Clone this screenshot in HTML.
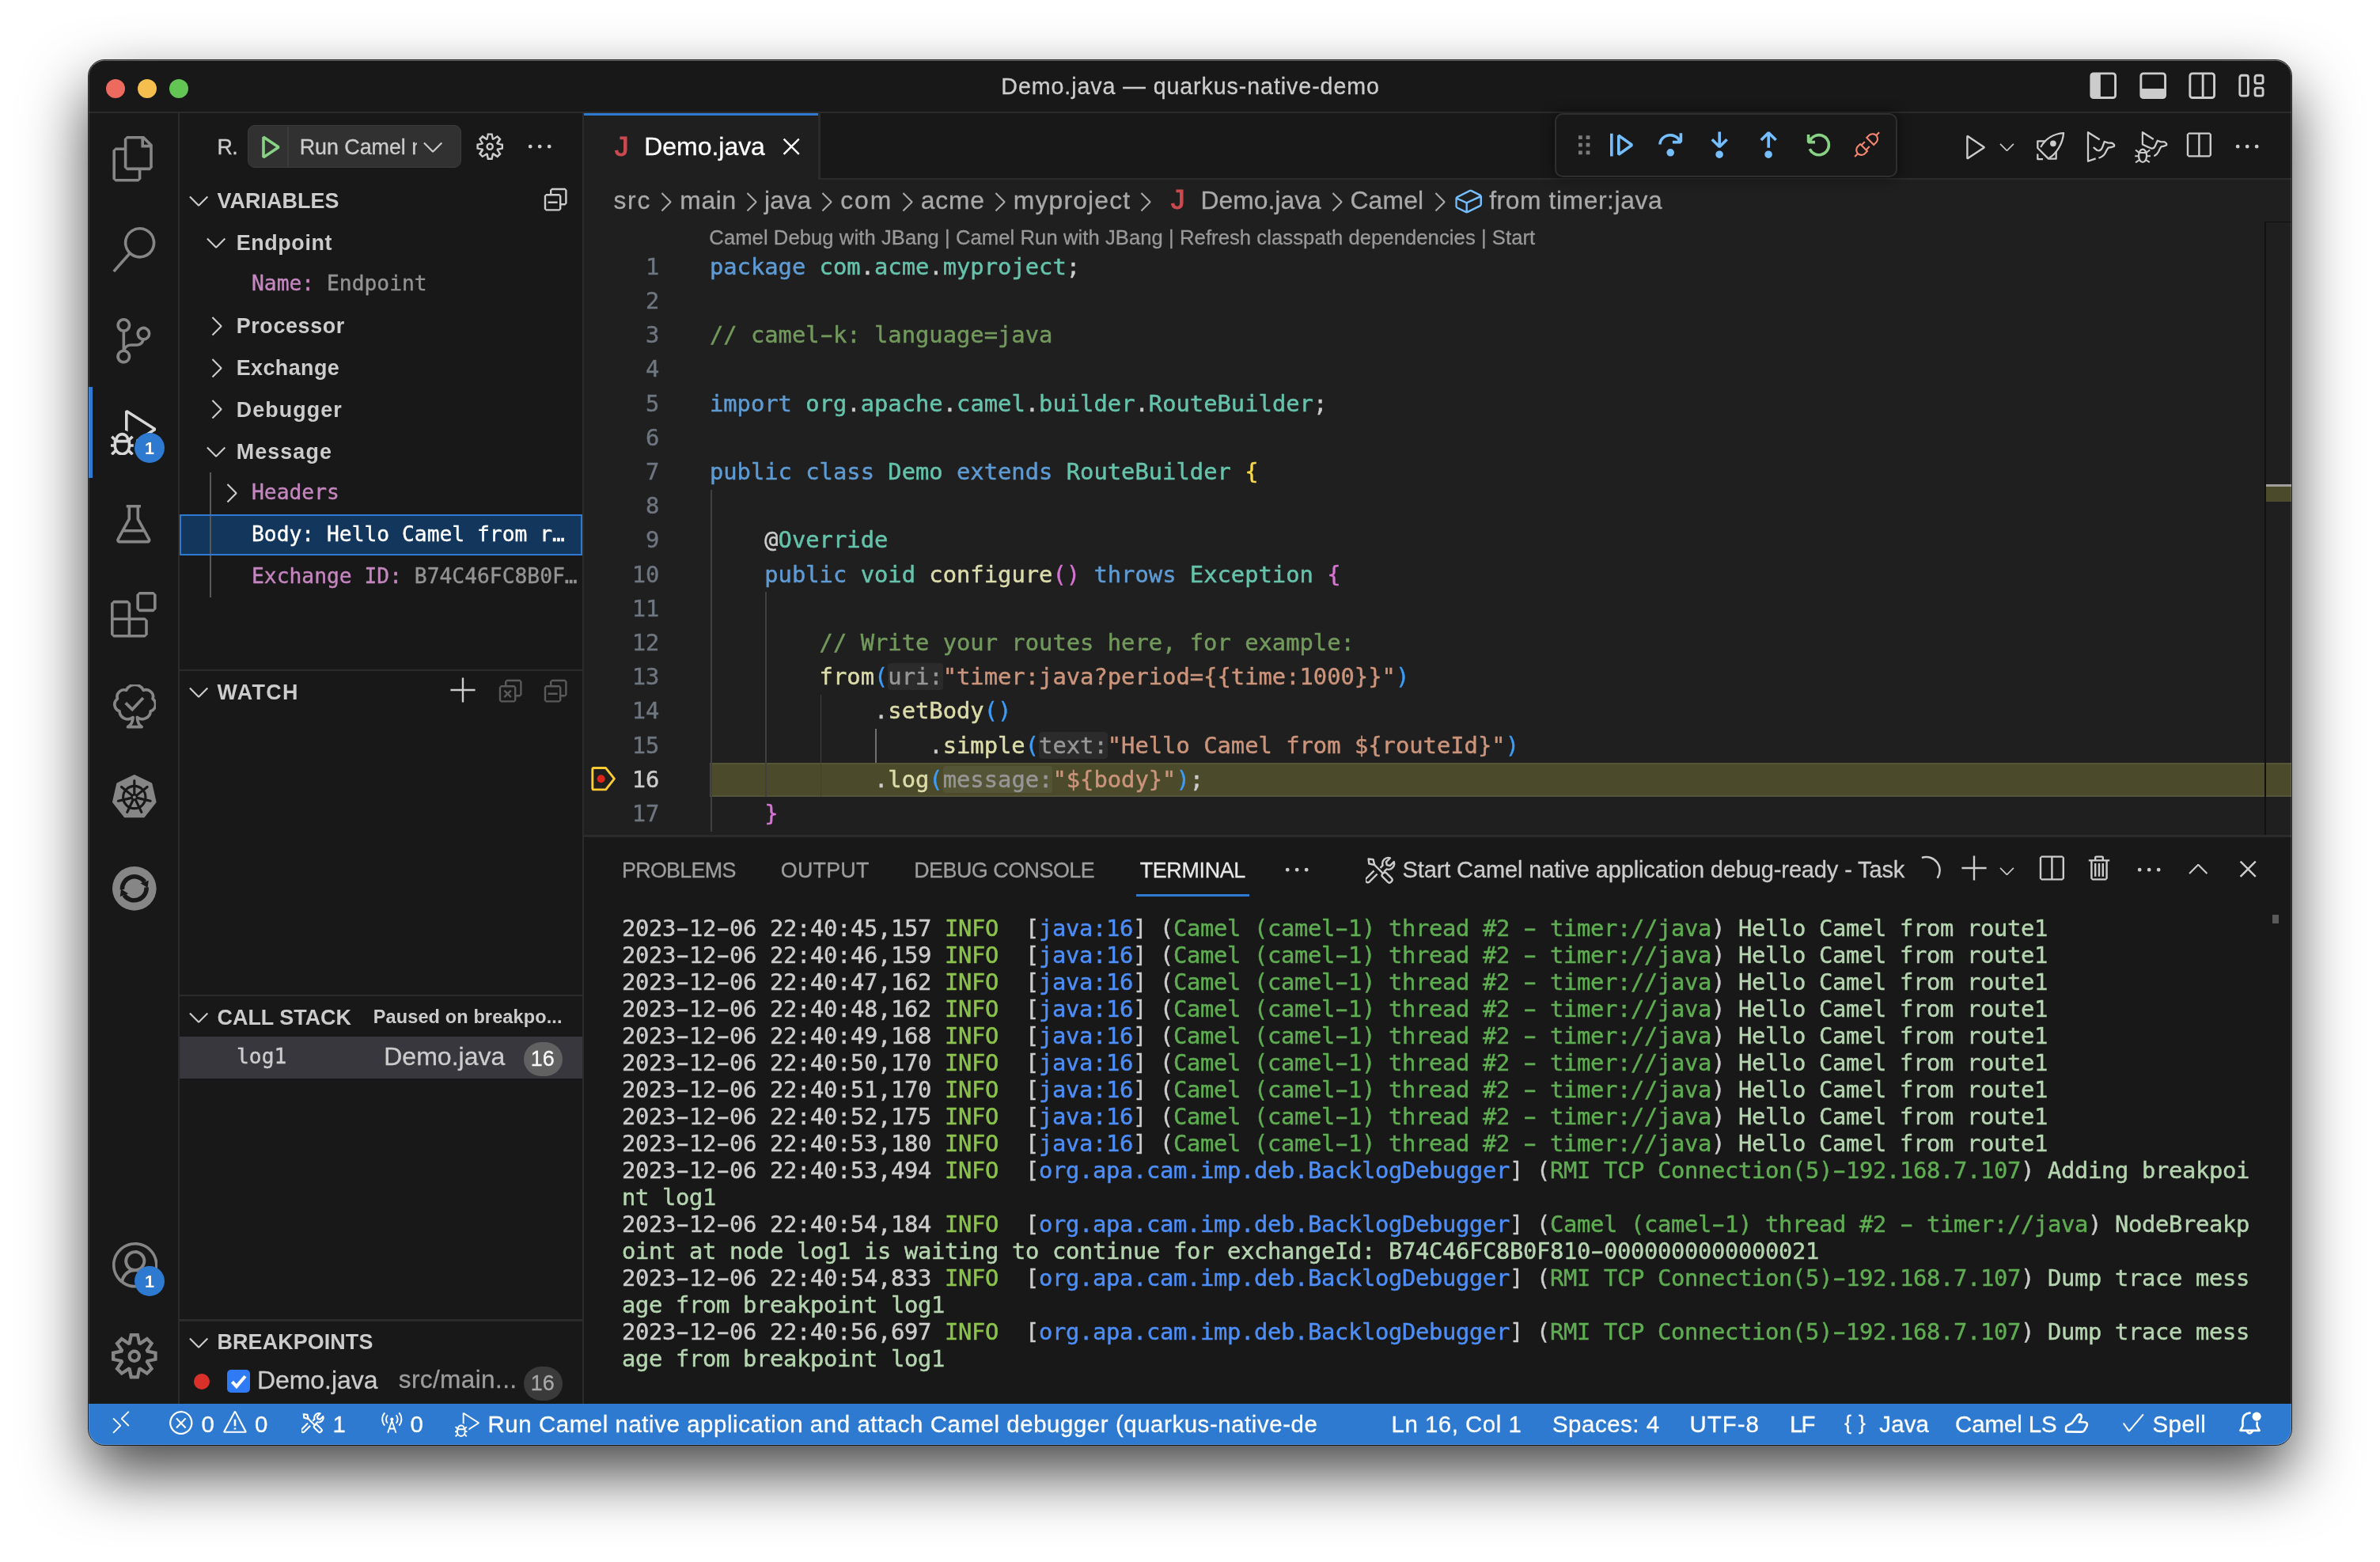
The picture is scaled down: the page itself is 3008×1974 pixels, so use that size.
<!DOCTYPE html>
<html><head><meta charset="utf-8"><title>Demo.java — quarkus-native-demo</title>
<style>
html,body{margin:0;padding:0;background:#fff;}
body{width:3008px;height:1974px;position:relative;overflow:hidden;}
#shadow{position:absolute;left:112px;top:76px;width:2784px;height:1750px;border-radius:20px;box-shadow:0 36px 80px rgba(0,0,0,0.73);}
#win{will-change:transform;position:absolute;left:0;top:0;width:3008px;height:1974px;clip-path:inset(76px 112px 148px 112px round 20px);background:#181818;}
#win div,#win svg{position:absolute}
</style></head><body>
<div id="shadow"></div>
<div id="win">
<div style="position:absolute;left:112.00px;top:76.00px;width:2784.00px;height:1750.00px;background:#181818;"></div>
<div style="position:absolute;left:738.00px;top:227.20px;width:2158.00px;height:829.00px;background:#1f1f1f;"></div>
<div style="position:absolute;left:112.00px;top:140.80px;width:2784.00px;height:2.40px;background:#2b2b2b;"></div>
<div style="position:absolute;left:224.80px;top:143.20px;width:2.40px;height:1631.00px;background:#2b2b2b;"></div>
<div style="position:absolute;left:735.60px;top:143.20px;width:2.40px;height:1631.00px;background:#2b2b2b;"></div>
<div style="position:absolute;left:133.80px;top:99.80px;width:24.40px;height:24.40px;background:#ed6a5e;border-radius:50%"></div>
<div style="position:absolute;left:173.80px;top:99.80px;width:24.40px;height:24.40px;background:#f5bf4f;border-radius:50%"></div>
<div style="position:absolute;left:213.80px;top:99.80px;width:24.40px;height:24.40px;background:#62c554;border-radius:50%"></div>
<div style="position:absolute;left:1265.37px;top:95.18px;font-family:'Liberation Sans', sans-serif;font-size:28.6px;line-height:28.6px;color:#cccccc;white-space:pre;-webkit-text-stroke:0.3px;letter-spacing:0.926px;">Demo.java — quarkus-native-demo</div>
<svg style="position:absolute;left:2639.40px;top:88.80px;" width="38.40" height="38.40" viewBox="0 0 16 16"><rect x="1.6" y="1.6" width="12.8" height="12.8" rx="1.3" fill="none" stroke="#cccccc" stroke-width="1.2"/><rect x="1.6" y="1.6" width="5" height="12.8" fill="#cccccc"/></svg>
<svg style="position:absolute;left:2701.60px;top:88.80px;" width="38.40" height="38.40" viewBox="0 0 16 16"><rect x="1.6" y="1.6" width="12.8" height="12.8" rx="1.3" fill="none" stroke="#cccccc" stroke-width="1.2"/><rect x="1.6" y="9.6" width="12.8" height="4.8" fill="#cccccc"/></svg>
<svg style="position:absolute;left:2763.80px;top:88.80px;" width="38.40" height="38.40" viewBox="0 0 16 16"><rect x="1.6" y="1.6" width="12.8" height="12.8" rx="1.3" fill="none" stroke="#cccccc" stroke-width="1.2"/><path d="M8.4 1.6v12.8" stroke="#cccccc" stroke-width="1.2" fill="none"/></svg>
<svg style="position:absolute;left:2826.80px;top:88.80px;" width="38.40" height="38.40" viewBox="0 0 16 16"><rect x="1.6" y="2.6" width="4.4" height="10.8" rx="1" fill="none" stroke="#cccccc" stroke-width="1.2"/><rect x="9.6" y="2.6" width="4.2" height="4.2" rx="1" fill="none" stroke="#cccccc" stroke-width="1.2"/><rect x="9.6" y="9.2" width="4.2" height="4.200" rx="1" fill="none" stroke="#cccccc" stroke-width="1.2"/></svg>
<svg style="position:absolute;left:140.20px;top:172.00px;" width="57.60" height="57.60" viewBox="0 0 24 24"><path fill="#868686" d="M17.5 0h-9L7 1.5V6H2.5L1 7.5v15.07L2.5 24h12.07L16 22.57V18h4.7l1.3-1.43V4.5L17.5 0zm0 2.12l2.38 2.38H17.5V2.12zm-3 20.38h-12v-15H7v9.07L8.5 18h6v4.5zm6-6h-12v-15H16V6h4.5v10.5z"/></svg>
<svg style="position:absolute;left:140.20px;top:287.20px;" width="57.60" height="57.60" viewBox="0 0 24 24"><path fill="#868686" d="M15.25 0a8.25 8.25 0 0 0-6.18 13.72L1 22.88l1.12 1 8.05-9.12A8.251 8.251 0 1 0 15.25.01V0zm0 15a6.75 6.75 0 1 1 0-13.5 6.75 6.75 0 0 1 0 13.5z"/></svg>
<svg style="position:absolute;left:140.20px;top:402.40px;" width="57.60" height="57.60" viewBox="0 0 24 24"><path fill="#868686" d="M21.007 8.222A3.738 3.738 0 0 0 15.045 5.2a3.737 3.737 0 0 0 1.156 6.583 2.988 2.988 0 0 1-2.668 1.67h-2.99a4.456 4.456 0 0 0-2.989 1.165V7.4a3.737 3.737 0 1 0-1.494 0v9.117a3.776 3.776 0 1 0 1.816.099 2.99 2.99 0 0 1 2.668-1.667h2.99a4.484 4.484 0 0 0 4.223-3.039 3.736 3.736 0 0 0 3.25-3.687zM4.565 3.738a2.242 2.242 0 1 1 4.484 0 2.242 2.242 0 0 1-4.484 0zm4.484 16.441a2.242 2.242 0 1 1-4.484 0 2.242 2.242 0 0 1 4.484 0zm8.221-9.715a2.242 2.242 0 1 1 0-4.485 2.242 2.242 0 0 1 0 4.485z"/></svg>
<div style="position:absolute;left:112.00px;top:488.80px;width:4.80px;height:115.20px;background:#2e7ad1;"></div>
<svg style="position:absolute;left:140.20px;top:517.60px;" width="57.60" height="57.60" viewBox="0 0 24 24"><path fill="#d7d7d7" d="M10.94 13.5l-1.32 1.32a3.73 3.73 0 0 0-7.24 0L1.06 13.5 0 14.56l1.72 1.72-.22.22V18H0v1.5h1.5v.08c.077.489.214.966.41 1.42L0 22.94 1.06 24l1.65-1.65A4.308 4.308 0 0 0 6 24a4.31 4.31 0 0 0 3.29-1.65L10.94 24 12 22.94 10.09 21c.198-.464.336-.951.41-1.45v-.1H12V18h-1.5v-1.5l-.22-.22L12 14.56l-1.06-1.06zM6 13.5a2.25 2.25 0 0 1 2.25 2.25h-4.5A2.25 2.25 0 0 1 6 13.5zm3 6a3.33 3.33 0 0 1-3 3 3.33 3.33 0 0 1-3-3v-2.25h6v2.25zm14.76-9.9v1.26L13.5 17.37V15.6l8.5-5.37L9 2v9.46a5.07 5.07 0 0 0-1.5-.72V.63L8.64 0l15.12 9.6z"/></svg>
<div style="position:absolute;left:169.60px;top:546.70px;width:38.40px;height:38.40px;background:#2e7ad1;border-radius:50%"></div>
<div style="position:absolute;left:182.90px;top:556.41px;font-family:'Liberation Sans', sans-serif;font-size:21.6px;line-height:21.6px;color:#ffffff;white-space:pre;font-weight:700;">1</div>
<svg style="position:absolute;left:140.20px;top:632.80px;" width="57.60" height="57.60" viewBox="0 0 24 24"><path d="M8.200 2.800h7.600M9.700 2.800v6.700L3.800 20.300a.8.8 0 0 0 .7 1.200h15a.8.8 0 0 0 .7-1.200L14.300 9.500V2.800M6.300 15.750h11.400" fill="none" stroke="#868686" stroke-width="1.500" stroke-linejoin="round"/></svg>
<svg style="position:absolute;left:140.20px;top:748.00px;" width="57.60" height="57.60" viewBox="0 0 24 24"><path fill="#868686" d="M13.5 1.5L15 0h7.5L24 1.5V9l-1.5 1.5H15L13.5 9V1.5zm1.5 0V9h7.5V1.5H15zM0 15V6l1.5-1.5H9L10.5 6v7.5H18l1.5 1.5v7.5L18 24H1.5L0 22.5V15zm9-1.5V6H1.5v7.5H9zM9 15H1.5v7.5H9V15zm1.5 7.5H18V15h-7.5v7.5z"/></svg>
<svg style="position:absolute;left:141.80px;top:864.80px;" width="55.00" height="57.30" viewBox="0 0 24 25"><path d="M11.4 18.1A4.600 4.600 0 0 1 3.9 14.7A3.900 3.900 0 0 1 2.8 7.900A3.800 3.800 0 0 1 7.700 3.200A5.200 5.200 0 0 1 17.100 3.200A3.900 3.900 0 0 1 22.300 7.900A3.900 3.900 0 0 1 21.100 14.700A4.600 4.600 0 0 1 13.700 18.100Q13.900 22 16.200 23.400H8.500Q11.200 22 11.400 18.100z" fill="none" stroke="#868686" stroke-width="1.600" stroke-linejoin="round"/><path d="M7.300 10.200l3.700 3.600 6-6.400" fill="none" stroke="#868686" stroke-width="1.600"/></svg>
<svg style="position:absolute;left:141.20px;top:978.40px;" width="57.60" height="57.60" viewBox="0 0 24 24"><polygon points="12.00,1.20 20.68,5.38 22.82,14.77 16.82,22.30 7.18,22.30 1.18,14.77 3.32,5.38" fill="#868686" stroke="#868686" stroke-width="1.500" stroke-linejoin="round"/><circle cx="12" cy="12.300" r="5.900" fill="none" stroke="#181818" stroke-width="1.300"/><circle cx="12" cy="12.300" r="1.900" fill="#181818"/><circle cx="12" cy="12.300" r=".8" fill="#868686"/><path d="M12.00 10.70L12.00 3.60" stroke="#181818" stroke-width="1.300" fill="none" stroke-linecap="round"/><path d="M13.25 11.30L18.80 6.88" stroke="#181818" stroke-width="1.300" fill="none" stroke-linecap="round"/><path d="M13.56 12.66L20.48 14.24" stroke="#181818" stroke-width="1.300" fill="none" stroke-linecap="round"/><path d="M12.69 13.74L15.77 20.14" stroke="#181818" stroke-width="1.300" fill="none" stroke-linecap="round"/><path d="M11.31 13.74L8.23 20.14" stroke="#181818" stroke-width="1.300" fill="none" stroke-linecap="round"/><path d="M10.44 12.66L3.52 14.24" stroke="#181818" stroke-width="1.300" fill="none" stroke-linecap="round"/><path d="M10.75 11.30L5.20 6.88" stroke="#181818" stroke-width="1.300" fill="none" stroke-linecap="round"/></svg>
<svg style="position:absolute;left:141.20px;top:1093.60px;" width="57.60" height="57.60" viewBox="0 0 24 24"><circle cx="12" cy="12" r="11.600" fill="#868686"/><path d="M5.600 12.600a6.500 6.500 0 0 1 11.800-4.100" fill="none" stroke="#181818" stroke-width="2.300"/><path d="M18.400 11.400a6.500 6.500 0 0 1-11.800 4.100" fill="none" stroke="#181818" stroke-width="2.300"/><path d="M15.200 9.300l4.300-1.500-.5 3.900zM8.800 14.700l-4.300 1.500.5-3.900z" fill="#181818"/></svg>
<svg style="position:absolute;left:141.50px;top:1570.20px;" width="57.60" height="57.60" viewBox="0 0 16 16"><path fill="#868686" d="M16 7.992C16 3.58 12.416 0 8 0S0 3.58 0 7.992c0 2.43 1.104 4.62 2.832 6.09.016.016.032.016.032.032.144.112.288.224.448.336.08.048.144.111.224.175A7.98 7.98 0 0 0 8.016 16a7.98 7.98 0 0 0 4.48-1.375c.08-.048.144-.111.224-.16.144-.111.304-.223.448-.335.016-.016.032-.016.032-.032 1.696-1.487 2.8-3.676 2.8-6.106zm-8 7.001c-1.504 0-2.88-.48-4.016-1.279.016-.128.048-.255.08-.383a4.17 4.17 0 0 1 .416-.991c.176-.304.384-.576.64-.816.24-.24.528-.463.816-.639.304-.176.624-.304.976-.4A4.15 4.15 0 0 1 8 10.342a4.185 4.185 0 0 1 2.928 1.166c.368.368.656.8.864 1.295.112.288.192.592.24.911A7.03 7.03 0 0 1 8 14.993zm-2.448-7.4a2.49 2.49 0 0 1-.208-1.024c0-.351.064-.703.208-1.023.144-.32.336-.607.576-.847.24-.24.528-.431.848-.575.32-.144.672-.208 1.024-.208.368 0 .704.064 1.024.208.32.144.608.336.848.575.24.24.432.528.576.847.144.32.208.672.208 1.023 0 .368-.064.704-.208 1.023a2.84 2.84 0 0 1-.576.848 2.84 2.84 0 0 1-.848.575 2.715 2.715 0 0 1-2.064 0 2.84 2.84 0 0 1-.848-.575 2.526 2.526 0 0 1-.56-.848zm7.424 5.306c0-.032-.016-.048-.016-.08a5.22 5.22 0 0 0-.688-1.406 4.883 4.883 0 0 0-1.088-1.135 5.207 5.207 0 0 0-1.04-.608 2.82 2.82 0 0 0 .464-.383 4.2 4.2 0 0 0 .624-.784 3.624 3.624 0 0 0 .528-1.934 3.71 3.71 0 0 0-.288-1.47 3.799 3.799 0 0 0-.816-1.199 3.845 3.845 0 0 0-1.2-.8 3.72 3.72 0 0 0-1.472-.287 3.72 3.72 0 0 0-1.472.288 3.631 3.631 0 0 0-1.2.815 3.84 3.84 0 0 0-.8 1.199 3.71 3.71 0 0 0-.288 1.47c0 .352.048.688.144 1.007.096.336.224.64.4.927.16.288.384.544.624.784.144.144.304.271.48.383a5.12 5.12 0 0 0-1.04.624c-.416.32-.784.703-1.088 1.119a4.999 4.999 0 0 0-.688 1.406c-.016.032-.016.064-.016.08C1.776 11.636.992 9.91.992 7.992.992 4.14 4.144.991 8 .991s7.008 3.149 7.008 7.001a6.96 6.96 0 0 1-2.032 4.907z"/></svg>
<div style="position:absolute;left:169.60px;top:1599.60px;width:38.40px;height:38.40px;background:#2e7ad1;border-radius:50%"></div>
<div style="position:absolute;left:182.90px;top:1609.31px;font-family:'Liberation Sans', sans-serif;font-size:21.6px;line-height:21.6px;color:#ffffff;white-space:pre;font-weight:700;">1</div>
<svg style="position:absolute;left:141.20px;top:1685.20px;" width="57.60" height="57.60" viewBox="0 0 24 24"><path fill="#868686" d="M19.85 8.75l4.15.83v4.84l-4.15.83 2.35 3.52-3.43 3.43-3.52-2.35-.83 4.15H9.58l-.83-4.15-3.52 2.35-3.43-3.43 2.35-3.52L0 14.42V9.58l4.15-.83L1.8 5.23 5.23 1.8l3.52 2.35L9.58 0h4.84l.83 4.15 3.52-2.35 3.43 3.43-2.35 3.52zm-1.57 5.07l4-.81v-2l-4-.81-.54-1.3 2.29-3.43-1.43-1.43-3.43 2.29-1.3-.54-.81-4h-2l-.81 4-1.3.54-3.43-2.29-1.43 1.43L6.38 8.9l-.54 1.3-4 .81v2l4 .81.54 1.3-2.29 3.43 1.43 1.43 3.43-2.29 1.3.54.81 4h2l.81-4 1.3-.54 3.43 2.29 1.43-1.43-2.29-3.43.54-1.3zm-8.186-4.672A3.43 3.43 0 0 1 12 8.57 3.44 3.44 0 0 1 15.43 12a3.43 3.43 0 1 1-5.336-2.852zm.956 4.274c.281.188.612.288.95.288A1.7 1.7 0 0 0 13.71 12a1.71 1.71 0 1 0-2.66 1.422z"/></svg>
<div style="position:absolute;left:274.55px;top:172.62px;font-family:'Liberation Sans', sans-serif;font-size:26.9px;line-height:26.9px;color:#cccccc;white-space:pre;-webkit-text-stroke:0.3px;letter-spacing:-0.716px;">R.</div>
<div style="position:absolute;left:313.20px;top:157.80px;width:269.60px;height:54.00px;background:#313131;border-radius:9px;box-sizing:border-box;border:1.500px solid #3c3c3c"></div>
<div style="position:absolute;left:363.00px;top:160.00px;width:1.50px;height:50.00px;background:#3c3c3c;"></div>
<svg style="position:absolute;left:320.80px;top:166.40px;" width="38.40" height="38.40" viewBox="0 0 16 16"><path fill="#89d185" d="M4.25 3l1.166-.624 8 5.333v1.248l-8 5.334-1.166-.624V3zm1.5 1.401v7.864l5.898-3.932L5.75 4.401z"/></svg>
<div style="position:absolute;left:378.70px;top:173.02px;font-family:'Liberation Sans', sans-serif;font-size:26.9px;line-height:26.9px;color:#cccccc;white-space:pre;-webkit-text-stroke:0.3px;letter-spacing:-0.050px;width:148.6px;overflow:hidden;">Run Camel n</div>
<svg style="position:absolute;left:527.80px;top:166.30px;" width="38.40" height="38.40" viewBox="0 0 16 16"><path fill="#cccccc" d="M7.976 10.072l4.357-4.357.62.618L8.284 11h-.618L3 6.333l.619-.618 4.357 4.357z"/></svg>
<svg style="position:absolute;left:599.60px;top:165.80px;" width="38.40" height="38.40" viewBox="0 0 16 16"><path fill="#cccccc" d="M9.1 4.4L8.6 2H7.4l-.5 2.4-.7.3-2-1.3-.9.8 1.3 2-.2.7-2.4.5v1.2l2.4.5.3.8-1.3 2 .8.8 2-1.3.8.3.4 2.3h1.2l.5-2.4.8-.3 2 1.3.8-.8-1.3-2 .3-.8 2.3-.4V7.4l-2.4-.5-.3-.8 1.3-2-.8-.8-2 1.3-.7-.2zM9.4 1l.5 2.4L12 2.1l2 2-1.4 2.1 2.4.4v2.8l-2.4.5L14 12l-2 2-2.1-1.4-.5 2.4H6.6l-.5-2.4L4 13.9l-2-2 1.4-2.1L1 9.4V6.6l2.4-.5L2.1 4l2-2 2.1 1.4.4-2.4h2.8zm.6 7c0 1.1-.9 2-2 2s-2-.9-2-2 .9-2 2-2 2 .9 2 2zM8 9c.6 0 1-.4 1-1s-.4-1-1-1-1 .4-1 1 .4 1 1 1z"/></svg>
<svg style="position:absolute;left:662.50px;top:165.80px;" width="38.40" height="38.40" viewBox="0 0 16 16"><path fill="#cccccc" d="M4 8a1 1 0 1 1-2 0 1 1 0 0 1 2 0zm5 0a1 1 0 1 1-2 0 1 1 0 0 1 2 0zm5 0a1 1 0 1 1-2 0 1 1 0 0 1 2 0z"/></svg>
<svg style="position:absolute;left:231.80px;top:234.40px;" width="38.40" height="38.40" viewBox="0 0 16 16"><path fill="#cccccc" d="M7.976 10.072l4.357-4.357.62.618L8.284 11h-.618L3 6.333l.619-.618 4.357 4.357z"/></svg>
<div style="position:absolute;left:274.55px;top:241.02px;font-family:'Liberation Sans', sans-serif;font-size:26.9px;line-height:26.9px;color:#cccccc;white-space:pre;font-weight:700;letter-spacing:0.050px;">VARIABLES</div>
<svg style="position:absolute;left:683.10px;top:233.40px;" width="38.40" height="38.40" viewBox="0 0 16 16"><path fill="#cccccc" d="M9 9H4v1h5V9z M5 3l1-1h7l1 1v7l-1 1h-2v2l-1 1H3l-1-1V6l1-1h2V3zm1 2h4l1 1v4h2V3H6v2zm4 1H3v7h7V6z"/></svg>
<svg style="position:absolute;left:253.50px;top:287.20px;" width="38.40" height="38.40" viewBox="0 0 16 16"><path fill="#cccccc" d="M7.976 10.072l4.357-4.357.62.618L8.284 11h-.618L3 6.333l.619-.618 4.357 4.357z"/></svg>
<div style="position:absolute;left:298.65px;top:293.62px;font-family:'Liberation Sans', sans-serif;font-size:26.9px;line-height:26.9px;color:#cccccc;white-space:pre;font-weight:700;letter-spacing:0.627px;">Endpoint</div>
<div style="position:absolute;left:318.00px;top:345.14px;font-family:'DejaVu Sans Mono', monospace;font-size:26.3px;line-height:26.3px;color:#c586c0;white-space:pre;-webkit-text-stroke:0.4px;letter-spacing:0.000px;">Name:</div>
<div style="position:absolute;left:413.00px;top:345.14px;font-family:'DejaVu Sans Mono', monospace;font-size:26.3px;line-height:26.3px;color:#939393;white-space:pre;-webkit-text-stroke:0.4px;letter-spacing:0.000px;">Endpoint</div>
<svg style="position:absolute;left:253.50px;top:392.80px;" width="38.40" height="38.40" viewBox="0 0 16 16"><path fill="#cccccc" d="M10.072 8.024L5.715 3.667l.618-.62L11 7.716v.618L6.333 13l-.618-.619 4.357-4.357z"/></svg>
<div style="position:absolute;left:298.65px;top:399.22px;font-family:'Liberation Sans', sans-serif;font-size:26.9px;line-height:26.9px;color:#cccccc;white-space:pre;font-weight:700;letter-spacing:0.643px;">Processor</div>
<svg style="position:absolute;left:253.50px;top:445.60px;" width="38.40" height="38.40" viewBox="0 0 16 16"><path fill="#cccccc" d="M10.072 8.024L5.715 3.667l.618-.62L11 7.716v.618L6.333 13l-.618-.619 4.357-4.357z"/></svg>
<div style="position:absolute;left:298.65px;top:452.02px;font-family:'Liberation Sans', sans-serif;font-size:26.9px;line-height:26.9px;color:#cccccc;white-space:pre;font-weight:700;letter-spacing:0.435px;">Exchange</div>
<svg style="position:absolute;left:253.50px;top:498.40px;" width="38.40" height="38.40" viewBox="0 0 16 16"><path fill="#cccccc" d="M10.072 8.024L5.715 3.667l.618-.62L11 7.716v.618L6.333 13l-.618-.619 4.357-4.357z"/></svg>
<div style="position:absolute;left:298.65px;top:504.82px;font-family:'Liberation Sans', sans-serif;font-size:26.9px;line-height:26.9px;color:#cccccc;white-space:pre;font-weight:700;letter-spacing:1.070px;">Debugger</div>
<svg style="position:absolute;left:253.50px;top:551.20px;" width="38.40" height="38.40" viewBox="0 0 16 16"><path fill="#cccccc" d="M7.976 10.072l4.357-4.357.62.618L8.284 11h-.618L3 6.333l.619-.618 4.357 4.357z"/></svg>
<div style="position:absolute;left:298.65px;top:557.62px;font-family:'Liberation Sans', sans-serif;font-size:26.9px;line-height:26.9px;color:#cccccc;white-space:pre;font-weight:700;letter-spacing:1.113px;">Message</div>
<div style="position:absolute;left:265.00px;top:596.80px;width:2.20px;height:158.40px;background:#585858;"></div>
<svg style="position:absolute;left:272.60px;top:604.00px;" width="38.40" height="38.40" viewBox="0 0 16 16"><path fill="#cccccc" d="M10.072 8.024L5.715 3.667l.618-.62L11 7.716v.618L6.333 13l-.618-.619 4.357-4.357z"/></svg>
<div style="position:absolute;left:318.00px;top:609.14px;font-family:'DejaVu Sans Mono', monospace;font-size:26.3px;line-height:26.3px;color:#c586c0;white-space:pre;-webkit-text-stroke:0.4px;letter-spacing:0.000px;">Headers</div>
<div style="position:absolute;left:227.20px;top:649.60px;width:508.40px;height:52.80px;background:#13365c;box-sizing:border-box;border:2.400px solid #2e7ad1"></div>
<div style="position:absolute;left:265.00px;top:652.00px;width:2.20px;height:48.00px;background:#585858;"></div>
<div style="position:absolute;left:318.00px;top:661.94px;font-family:'DejaVu Sans Mono', monospace;font-size:26.3px;line-height:26.3px;color:#ffffff;white-space:pre;-webkit-text-stroke:0.4px;letter-spacing:0.000px;">Body: Hello Camel from r…</div>
<div style="position:absolute;left:318.00px;top:714.74px;font-family:'DejaVu Sans Mono', monospace;font-size:26.3px;line-height:26.3px;color:#c586c0;white-space:pre;-webkit-text-stroke:0.4px;letter-spacing:0.000px;">Exchange ID:</div>
<div style="position:absolute;left:523.84px;top:714.74px;font-family:'DejaVu Sans Mono', monospace;font-size:26.3px;line-height:26.3px;color:#939393;white-space:pre;-webkit-text-stroke:0.4px;letter-spacing:0.000px;">B74C46FC8B0F…</div>
<div style="position:absolute;left:227.20px;top:845.60px;width:508.40px;height:2.40px;background:#2b2b2b;"></div>
<svg style="position:absolute;left:231.80px;top:855.20px;" width="38.40" height="38.40" viewBox="0 0 16 16"><path fill="#cccccc" d="M7.976 10.072l4.357-4.357.62.618L8.284 11h-.618L3 6.333l.619-.618 4.357 4.357z"/></svg>
<div style="position:absolute;left:274.55px;top:861.82px;font-family:'Liberation Sans', sans-serif;font-size:26.9px;line-height:26.9px;color:#cccccc;white-space:pre;font-weight:700;letter-spacing:1.299px;">WATCH</div>
<svg style="position:absolute;left:566.70px;top:853.80px;" width="38.40" height="38.40" viewBox="0 0 16 16"><path fill="#cccccc" d="M14 7v1H8v6H7V8H1V7h6V1h1v6h6z"/></svg>
<svg style="position:absolute;left:626.00px;top:854.30px;" width="38.40" height="38.40" viewBox="0 0 16 16"><path fill="#5a5a5a" d="M8.621 8.086l-.707-.707L6.5 8.793 5.086 7.379l-.707.707L5.793 9.5l-1.414 1.414.707.707L6.5 10.207l1.414 1.414.707-.707L7.207 9.5l1.414-1.414z M5 3l1-1h7l1 1v7l-1 1h-2v2l-1 1H3l-1-1V6l1-1h2V3zm1 2h4l1 1v4h2V3H6v2zm4 1H3v7h7V6z"/></svg>
<svg style="position:absolute;left:683.10px;top:854.30px;" width="38.40" height="38.40" viewBox="0 0 16 16"><path fill="#5a5a5a" d="M9 9H4v1h5V9z M5 3l1-1h7l1 1v7l-1 1h-2v2l-1 1H3l-1-1V6l1-1h2V3zm1 2h4l1 1v4h2V3H6v2zm4 1H3v7h7V6z"/></svg>
<div style="position:absolute;left:227.20px;top:1256.80px;width:508.40px;height:2.40px;background:#2b2b2b;"></div>
<svg style="position:absolute;left:231.80px;top:1266.40px;" width="38.40" height="38.40" viewBox="0 0 16 16"><path fill="#cccccc" d="M7.976 10.072l4.357-4.357.62.618L8.284 11h-.618L3 6.333l.619-.618 4.357 4.357z"/></svg>
<div style="position:absolute;left:274.55px;top:1273.02px;font-family:'Liberation Sans', sans-serif;font-size:26.9px;line-height:26.9px;color:#cccccc;white-space:pre;font-weight:700;letter-spacing:0.009px;">CALL STACK</div>
<div style="position:absolute;left:471.72px;top:1273.60px;font-family:'Liberation Sans', sans-serif;font-size:23.5px;line-height:23.5px;color:#cccccc;white-space:pre;font-weight:700;letter-spacing:0.130px;">Paused on breakpo...</div>
<div style="position:absolute;left:227.20px;top:1310.40px;width:508.40px;height:52.80px;background:#37373d;"></div>
<div style="position:absolute;left:299.00px;top:1322.04px;font-family:'DejaVu Sans Mono', monospace;font-size:26.3px;line-height:26.3px;color:#cccccc;white-space:pre;-webkit-text-stroke:0.4px;letter-spacing:0.000px;">log1</div>
<div style="position:absolute;left:485.20px;top:1319.11px;font-family:'Liberation Sans', sans-serif;font-size:32px;line-height:32px;color:#cccccc;white-space:pre;-webkit-text-stroke:0.3px;letter-spacing:0.031px;">Demo.java</div>
<div style="position:absolute;left:661.80px;top:1317.00px;width:49.20px;height:42.80px;background:#616161;border-radius:22px"></div>
<div style="position:absolute;left:670.85px;top:1324.82px;font-family:'Liberation Sans', sans-serif;font-size:26.9px;line-height:26.9px;color:#f8f8f8;white-space:pre;-webkit-text-stroke:0.3px;letter-spacing:0.037px;">16</div>
<div style="position:absolute;left:227.20px;top:1667.20px;width:508.40px;height:2.40px;background:#2b2b2b;"></div>
<svg style="position:absolute;left:231.80px;top:1676.80px;" width="38.40" height="38.40" viewBox="0 0 16 16"><path fill="#cccccc" d="M7.976 10.072l4.357-4.357.62.618L8.284 11h-.618L3 6.333l.619-.618 4.357 4.357z"/></svg>
<div style="position:absolute;left:274.55px;top:1683.42px;font-family:'Liberation Sans', sans-serif;font-size:26.9px;line-height:26.9px;color:#cccccc;white-space:pre;font-weight:700;letter-spacing:0.107px;">BREAKPOINTS</div>
<div style="position:absolute;left:245.00px;top:1736.20px;width:19.80px;height:19.80px;background:#d9302a;border-radius:50%"></div>
<div style="position:absolute;left:287.00px;top:1730.60px;width:29.40px;height:29.40px;background:#2f7bf5;border-radius:5px"></div>
<svg style="position:absolute;left:287.00px;top:1730.60px;" width="29.40" height="29.40" viewBox="0 0 16 16"><path d="M3.500 8.300l3 3.200 6-7" fill="none" stroke="#fff" stroke-width="2.200"/></svg>
<div style="position:absolute;left:324.90px;top:1727.71px;font-family:'Liberation Sans', sans-serif;font-size:32px;line-height:32px;color:#cccccc;white-space:pre;-webkit-text-stroke:0.3px;letter-spacing:-0.044px;">Demo.java</div>
<div style="position:absolute;left:503.72px;top:1728.44px;font-family:'Liberation Sans', sans-serif;font-size:31.6px;line-height:31.6px;color:#9d9d9d;white-space:pre;-webkit-text-stroke:0.3px;letter-spacing:0.364px;">src/main...</div>
<div style="position:absolute;left:661.80px;top:1727.00px;width:49.20px;height:42.80px;background:#3a3a3a;border-radius:22px"></div>
<div style="position:absolute;left:670.85px;top:1734.82px;font-family:'Liberation Sans', sans-serif;font-size:26.9px;line-height:26.9px;color:#a8a8a8;white-space:pre;-webkit-text-stroke:0.3px;letter-spacing:0.037px;">16</div>
<div style="position:absolute;left:738.00px;top:143.20px;width:2158.00px;height:84.00px;background:#181818;"></div>
<div style="position:absolute;left:738.00px;top:224.80px;width:2158.00px;height:2.40px;background:#2b2b2b;"></div>
<div style="position:absolute;left:738.00px;top:143.20px;width:298.40px;height:84.00px;background:#1f1f1f;"></div>
<div style="position:absolute;left:738.00px;top:143.20px;width:298.40px;height:2.60px;background:#2e7ad1;"></div>
<div style="position:absolute;left:1034.20px;top:143.20px;width:2.40px;height:84.00px;background:#2b2b2b;"></div>
<div style="position:absolute;left:777.00px;top:166.77px;font-family:'Liberation Sans', sans-serif;font-size:35px;line-height:35px;color:#cc4a4f;white-space:pre;-webkit-text-stroke:0.3px;-webkit-text-stroke:1.200px #cc4a4f;">J</div>
<div style="position:absolute;left:814.30px;top:169.21px;font-family:'Liberation Sans', sans-serif;font-size:32px;line-height:32px;color:#ffffff;white-space:pre;-webkit-text-stroke:0.3px;letter-spacing:-0.044px;">Demo.java</div>
<svg style="position:absolute;left:981.00px;top:165.80px;" width="38.40" height="38.40" viewBox="0 0 16 16"><path fill="#ffffff" d="M8 8.707l3.646 3.647.708-.707L8.707 8l3.647-3.646-.707-.708L8 7.293 4.354 3.646l-.707.708L7.293 8l-3.646 3.646.707.708L8 8.707z"/></svg>
<div style="position:absolute;left:1965.00px;top:143.40px;width:433.00px;height:80.20px;background:#181818;border-radius:10px;box-sizing:border-box;border:2px solid #2f2f2f;box-shadow:0 0 16px rgba(0,0,0,0.55)"></div>
<svg style="position:absolute;left:1983.30px;top:164.10px;" width="38.40" height="38.40" viewBox="0 0 16 16"><path fill="#7a7a7a" d="M5 3h2v2H5zm0 4h2v2H5zm0 4h2v2H5zm4-8h2v2H9zm0 4h2v2H9zm0 4h2v2H9z"/></svg>
<svg style="position:absolute;left:2029.30px;top:164.00px;" width="38.40" height="38.40" viewBox="0 0 16 16"><path fill="#75beff" d="M2.5 2H4v12H2.5V2zm4.936.39L6.25 3v10l1.186.61 7-5V7.39l-7-5zM12.71 8l-4.96 3.543V4.457L12.71 8z"/></svg>
<svg style="position:absolute;left:2091.60px;top:164.00px;" width="38.40" height="38.40" viewBox="0 0 16 16"><path fill="#75beff" d="M14.25 5.75v-4h-1.5v2.542c-1.145-1.359-2.911-2.209-4.84-2.209-3.177 0-5.92 2.307-6.16 5.398l-.02.269h1.501l.022-.226c.212-2.195 2.202-3.94 4.656-3.94 1.736 0 3.244.875 4.05 2.166h-2.83v1.5h4.163l.962-.975V5.75h-.004zM8 14a2 2 0 1 0 0-4 2 2 0 0 0 0 4z"/></svg>
<svg style="position:absolute;left:2154.30px;top:164.30px;" width="38.40" height="38.40" viewBox="0 0 16 16"><path fill="#75beff" d="M8 9.532h.542l3.905-3.905-1.061-1.06-2.637 2.61V1H7.251v6.177l-2.637-2.61-1.061 1.06 3.905 3.905H8zm1.956 3.481a2 2 0 1 1-4 0 2 2 0 0 1 4 0z"/></svg>
<svg style="position:absolute;left:2216.30px;top:164.30px;" width="38.40" height="38.40" viewBox="0 0 16 16"><path fill="#75beff" d="M8 1h-.542L3.553 4.905l1.061 1.06 2.637-2.61v6.177h1.498V3.355l2.637 2.61 1.061-1.06L8.542 1H8zm1.956 12.013a2 2 0 1 1-4 0 2 2 0 0 1 4 0z"/></svg>
<svg style="position:absolute;left:2278.80px;top:164.30px;" width="38.40" height="38.40" viewBox="0 0 16 16"><path fill="#89d185" d="M12.75 8a4.5 4.5 0 0 1-8.61 1.834l-1.391.565A6.001 6.001 0 0 0 14.25 8 6 6 0 0 0 3.5 4.334V2.5H2v4l.75.75h3.5v-1.5H4.352A4.5 4.5 0 0 1 12.75 8z"/></svg>
<svg style="position:absolute;left:2340.80px;top:164.30px;" width="38.40" height="38.40" viewBox="0 0 16 16"><path fill="#f48771" d="M13.617 3.844a2.87 2.87 0 0 0-.451-.868l1.354-1.36L13.904 1l-1.36 1.354a2.877 2.877 0 0 0-.868-.452 3.073 3.073 0 0 0-2.14.075 3.03 3.03 0 0 0-.991.664L7 4.192l4.327 4.328 1.552-1.545c.287-.287.508-.618.663-.992a3.074 3.074 0 0 0 .075-2.14zm-.889 1.804a2.15 2.15 0 0 1-.471.705l-.93.93-3.09-3.09.93-.93a2.15 2.15 0 0 1 .704-.472 2.134 2.134 0 0 1 1.689.007c.264.114.494.271.69.472.2.195.358.426.472.69a2.134 2.134 0 0 1 .007 1.688zm-4.824 4.994l1.484-1.545-.616-.622-1.49 1.551-1.86-1.859 1.491-1.552L6.291 6 4.808 7.545l-.616-.615-1.551 1.545a3 3 0 0 0-.663.998 3.023 3.023 0 0 0-.233 1.169c0 .332.05.656.15.97.105.31.258.597.459.862L1 13.834l.615.615 1.36-1.353c.265.2.552.353.862.458.314.1.638.15.97.15.406 0 .796-.077 1.17-.232.378-.155.71-.376.998-.663l1.545-1.552-.616-.615zm-2.262 2.023a2.16 2.16 0 0 1-.834.164c-.301 0-.586-.057-.855-.17a2.278 2.278 0 0 1-.697-.466 2.28 2.28 0 0 1-.465-.697 2.167 2.167 0 0 1-.17-.854 2.16 2.16 0 0 1 .642-1.545l.93-.93 3.09 3.09-.93.93a2.22 2.22 0 0 1-.711.478z"/></svg>
<svg style="position:absolute;left:2478.30px;top:166.30px;" width="38.40" height="38.40" viewBox="0 0 16 16"><path fill="#cccccc" d="M3.78 2L3 2.41v12l.78.42 9-6V8l-9-6zM4 13.48V3.35l7.6 5.07L4 13.48z"/></svg>
<svg style="position:absolute;left:2521.50px;top:171.00px;" width="29.00" height="29.00" viewBox="0 0 16 16"><path fill="#cccccc" d="M7.976 10.072l4.357-4.357.62.618L8.284 11h-.618L3 6.333l.619-.618 4.357 4.357z"/></svg>
<svg style="position:absolute;left:2560.00px;top:150.00px;" width="200.00" height="70.00" viewBox="0 0 2380.0 833.0"><g fill="none" stroke="#cccccc" stroke-width="27" stroke-linejoin="round"><path d="M228 428C300 300 430 225 572 215C560 370 470 520 356 592"/><path d="M300 338H182V440L345 603H460V490"/><path d="M182 530V608H262"/><circle cx="415" cy="372" r="46" fill="#cccccc" stroke="none"/><path d="M1115 315L940 205V640L1055 600"/><path d="M1020 430L1078 476Q1130 492 1155 432L1187 345L1235 362L1300 366Q1348 392 1330 416Q1290 432 1245 437Q1215 472 1200 515Q1172 570 1100 592"/><path d="M1925 310L1760 205V388Q1850 432 1895 448Q1930 452 1945 420L1985 330L2030 346L2090 350Q2135 378 2118 398Q2085 414 2040 420Q2015 455 2000 495Q1980 540 1932 562"/><ellipse cx="1762" cy="557" rx="60" ry="97" fill="#181818"/><path d="M1702 512H1822M1700 562H1645M1824 562H1880M1708 512L1655 470M1816 512L1870 470M1712 620L1655 658M1812 620L1866 656" stroke-width="24"/></g></svg>
<svg style="position:absolute;left:2759.30px;top:164.80px;" width="38.40" height="38.40" viewBox="0 0 16 16"><path fill="#cccccc" d="M14 1H3L2 2v11l1 1h11l1-1V2l-1-1zM8 13H3V2h5v11zm6 0H9V2h5v11z"/></svg>
<svg style="position:absolute;left:2821.30px;top:165.80px;" width="38.40" height="38.40" viewBox="0 0 16 16"><path fill="#cccccc" d="M4 8a1 1 0 1 1-2 0 1 1 0 0 1 2 0zm5 0a1 1 0 1 1-2 0 1 1 0 0 1 2 0zm5 0a1 1 0 1 1-2 0 1 1 0 0 1 2 0z"/></svg>
<div style="position:absolute;left:775.41px;top:237.87px;font-family:'Liberation Sans', sans-serif;font-size:31.8px;line-height:31.8px;color:#a9a9a9;white-space:pre;-webkit-text-stroke:0.3px;letter-spacing:1.745px;">src</div>
<svg style="position:absolute;left:822.40px;top:235.80px;" width="38.40" height="38.40" viewBox="0 0 16 16"><path fill="#a9a9a9" d="M10.072 8.024L5.715 3.667l.618-.62L11 7.716v.618L6.333 13l-.618-.619 4.357-4.357z"/></svg>
<div style="position:absolute;left:859.31px;top:237.87px;font-family:'Liberation Sans', sans-serif;font-size:31.8px;line-height:31.8px;color:#a9a9a9;white-space:pre;-webkit-text-stroke:0.3px;letter-spacing:0.619px;">main</div>
<svg style="position:absolute;left:930.40px;top:235.80px;" width="38.40" height="38.40" viewBox="0 0 16 16"><path fill="#a9a9a9" d="M10.072 8.024L5.715 3.667l.618-.62L11 7.716v.618L6.333 13l-.618-.619 4.357-4.357z"/></svg>
<div style="position:absolute;left:966.01px;top:237.87px;font-family:'Liberation Sans', sans-serif;font-size:31.8px;line-height:31.8px;color:#a9a9a9;white-space:pre;-webkit-text-stroke:0.3px;letter-spacing:0.245px;">java</div>
<svg style="position:absolute;left:1025.40px;top:235.80px;" width="38.40" height="38.40" viewBox="0 0 16 16"><path fill="#a9a9a9" d="M10.072 8.024L5.715 3.667l.618-.62L11 7.716v.618L6.333 13l-.618-.619 4.357-4.357z"/></svg>
<div style="position:absolute;left:1062.21px;top:237.87px;font-family:'Liberation Sans', sans-serif;font-size:31.8px;line-height:31.8px;color:#a9a9a9;white-space:pre;-webkit-text-stroke:0.3px;letter-spacing:2.001px;">com</div>
<svg style="position:absolute;left:1126.90px;top:235.80px;" width="38.40" height="38.40" viewBox="0 0 16 16"><path fill="#a9a9a9" d="M10.072 8.024L5.715 3.667l.618-.62L11 7.716v.618L6.333 13l-.618-.619 4.357-4.357z"/></svg>
<div style="position:absolute;left:1163.71px;top:237.87px;font-family:'Liberation Sans', sans-serif;font-size:31.8px;line-height:31.8px;color:#a9a9a9;white-space:pre;-webkit-text-stroke:0.3px;letter-spacing:0.838px;">acme</div>
<svg style="position:absolute;left:1243.90px;top:235.80px;" width="38.40" height="38.40" viewBox="0 0 16 16"><path fill="#a9a9a9" d="M10.072 8.024L5.715 3.667l.618-.62L11 7.716v.618L6.333 13l-.618-.619 4.357-4.357z"/></svg>
<div style="position:absolute;left:1280.81px;top:237.87px;font-family:'Liberation Sans', sans-serif;font-size:31.8px;line-height:31.8px;color:#a9a9a9;white-space:pre;-webkit-text-stroke:0.3px;letter-spacing:1.181px;">myproject</div>
<svg style="position:absolute;left:1428.40px;top:235.80px;" width="38.40" height="38.40" viewBox="0 0 16 16"><path fill="#a9a9a9" d="M10.072 8.024L5.715 3.667l.618-.62L11 7.716v.618L6.333 13l-.618-.619 4.357-4.357z"/></svg>
<div style="position:absolute;left:1480.00px;top:233.87px;font-family:'Liberation Sans', sans-serif;font-size:35px;line-height:35px;color:#cc4a4f;white-space:pre;-webkit-text-stroke:0.3px;-webkit-text-stroke:1.200px #cc4a4f;">J</div>
<div style="position:absolute;left:1517.41px;top:237.87px;font-family:'Liberation Sans', sans-serif;font-size:31.8px;line-height:31.8px;color:#a9a9a9;white-space:pre;-webkit-text-stroke:0.3px;letter-spacing:0.049px;">Demo.java</div>
<svg style="position:absolute;left:1670.40px;top:235.80px;" width="38.40" height="38.40" viewBox="0 0 16 16"><path fill="#a9a9a9" d="M10.072 8.024L5.715 3.667l.618-.62L11 7.716v.618L6.333 13l-.618-.619 4.357-4.357z"/></svg>
<div style="position:absolute;left:1706.41px;top:237.87px;font-family:'Liberation Sans', sans-serif;font-size:31.8px;line-height:31.8px;color:#a9a9a9;white-space:pre;-webkit-text-stroke:0.3px;letter-spacing:0.222px;">Camel</div>
<svg style="position:absolute;left:1800.40px;top:235.80px;" width="38.40" height="38.40" viewBox="0 0 16 16"><path fill="#a9a9a9" d="M10.072 8.024L5.715 3.667l.618-.62L11 7.716v.618L6.333 13l-.618-.619 4.357-4.357z"/></svg>
<svg style="position:absolute;left:1837.40px;top:235.30px;" width="38.40" height="38.40" viewBox="0 0 16 16"><path fill="#75beff" d="M14.45 4.5l-5-2.5h-.9l-7 3.5-.55.89v4.5l.55.9 5 2.5h.9l7-3.5.55-.9v-4.5l-.55-.89zm-8 8.640l-4.500-2.250V7.170l4.500 2v3.970zm.5-4.800L2.290 6.230l6.660-3.340 4.670 2.340-6.670 3.110zm7 1.550l-6.500 3.250V9.210l6.500-3v3.680z"/></svg>
<div style="position:absolute;left:1882.21px;top:237.87px;font-family:'Liberation Sans', sans-serif;font-size:31.8px;line-height:31.8px;color:#a9a9a9;white-space:pre;-webkit-text-stroke:0.3px;letter-spacing:0.580px;">from timer:java</div>
<div style="position:absolute;left:897.00px;top:964.10px;width:1999.00px;height:43.20px;background:#4b4b2b;box-sizing:border-box;border-top:2px solid #55553a;border-bottom:2px solid #55553a"></div>
<div style="position:absolute;left:2862.40px;top:280.00px;width:1.40px;height:776.00px;background:#111111;"></div>
<div style="position:absolute;left:2862.40px;top:280.00px;width:33.60px;height:1.40px;background:#111111;"></div>
<div style="position:absolute;left:2863.80px;top:611.50px;width:32.20px;height:3.00px;background:#a0a09a;"></div>
<div style="position:absolute;left:2863.80px;top:614.50px;width:32.20px;height:19.50px;background:#4b4b2b;"></div>
<div style="position:absolute;left:898.00px;top:618.50px;width:1.60px;height:432.00px;background:#404040;"></div>
<div style="position:absolute;left:967.40px;top:748.10px;width:1.60px;height:259.20px;background:#404040;"></div>
<div style="position:absolute;left:1036.80px;top:877.70px;width:1.60px;height:129.60px;background:#404040;"></div>
<div style="position:absolute;left:1106.00px;top:920.90px;width:2.00px;height:43.20px;background:#707070;"></div>
<div style="position:absolute;left:896.32px;top:287.62px;font-family:'Liberation Sans', sans-serif;font-size:25.6px;line-height:25.6px;color:#999999;white-space:pre;-webkit-text-stroke:0.3px;letter-spacing:0.080px;">Camel Debug with JBang | Camel Run with JBang | Refresh classpath dependencies | Start</div>
<div style="position:absolute;left:816.06px;top:322.73px;font-family:'DejaVu Sans Mono', monospace;font-size:28.8px;line-height:28.8px;color:#6e7681;white-space:pre;-webkit-text-stroke:0.4px;letter-spacing:0.002px;">1</div>
<div style="position:absolute;left:816.06px;top:365.93px;font-family:'DejaVu Sans Mono', monospace;font-size:28.8px;line-height:28.8px;color:#6e7681;white-space:pre;-webkit-text-stroke:0.4px;letter-spacing:0.002px;">2</div>
<div style="position:absolute;left:816.06px;top:409.13px;font-family:'DejaVu Sans Mono', monospace;font-size:28.8px;line-height:28.8px;color:#6e7681;white-space:pre;-webkit-text-stroke:0.4px;letter-spacing:0.002px;">3</div>
<div style="position:absolute;left:816.06px;top:452.33px;font-family:'DejaVu Sans Mono', monospace;font-size:28.8px;line-height:28.8px;color:#6e7681;white-space:pre;-webkit-text-stroke:0.4px;letter-spacing:0.002px;">4</div>
<div style="position:absolute;left:816.06px;top:495.53px;font-family:'DejaVu Sans Mono', monospace;font-size:28.8px;line-height:28.8px;color:#6e7681;white-space:pre;-webkit-text-stroke:0.4px;letter-spacing:0.002px;">5</div>
<div style="position:absolute;left:816.06px;top:538.73px;font-family:'DejaVu Sans Mono', monospace;font-size:28.8px;line-height:28.8px;color:#6e7681;white-space:pre;-webkit-text-stroke:0.4px;letter-spacing:0.002px;">6</div>
<div style="position:absolute;left:816.06px;top:581.93px;font-family:'DejaVu Sans Mono', monospace;font-size:28.8px;line-height:28.8px;color:#6e7681;white-space:pre;-webkit-text-stroke:0.4px;letter-spacing:0.002px;">7</div>
<div style="position:absolute;left:816.06px;top:625.13px;font-family:'DejaVu Sans Mono', monospace;font-size:28.8px;line-height:28.8px;color:#6e7681;white-space:pre;-webkit-text-stroke:0.4px;letter-spacing:0.002px;">8</div>
<div style="position:absolute;left:816.06px;top:668.33px;font-family:'DejaVu Sans Mono', monospace;font-size:28.8px;line-height:28.8px;color:#6e7681;white-space:pre;-webkit-text-stroke:0.4px;letter-spacing:0.002px;">9</div>
<div style="position:absolute;left:798.72px;top:711.53px;font-family:'DejaVu Sans Mono', monospace;font-size:28.8px;line-height:28.8px;color:#6e7681;white-space:pre;-webkit-text-stroke:0.4px;letter-spacing:0.002px;">10</div>
<div style="position:absolute;left:798.72px;top:754.73px;font-family:'DejaVu Sans Mono', monospace;font-size:28.8px;line-height:28.8px;color:#6e7681;white-space:pre;-webkit-text-stroke:0.4px;letter-spacing:0.002px;">11</div>
<div style="position:absolute;left:798.72px;top:797.93px;font-family:'DejaVu Sans Mono', monospace;font-size:28.8px;line-height:28.8px;color:#6e7681;white-space:pre;-webkit-text-stroke:0.4px;letter-spacing:0.002px;">12</div>
<div style="position:absolute;left:798.72px;top:841.13px;font-family:'DejaVu Sans Mono', monospace;font-size:28.8px;line-height:28.8px;color:#6e7681;white-space:pre;-webkit-text-stroke:0.4px;letter-spacing:0.002px;">13</div>
<div style="position:absolute;left:798.72px;top:884.33px;font-family:'DejaVu Sans Mono', monospace;font-size:28.8px;line-height:28.8px;color:#6e7681;white-space:pre;-webkit-text-stroke:0.4px;letter-spacing:0.002px;">14</div>
<div style="position:absolute;left:798.72px;top:927.53px;font-family:'DejaVu Sans Mono', monospace;font-size:28.8px;line-height:28.8px;color:#6e7681;white-space:pre;-webkit-text-stroke:0.4px;letter-spacing:0.002px;">15</div>
<div style="position:absolute;left:798.72px;top:970.73px;font-family:'DejaVu Sans Mono', monospace;font-size:28.8px;line-height:28.8px;color:#cccccc;white-space:pre;-webkit-text-stroke:0.4px;letter-spacing:0.002px;">16</div>
<div style="position:absolute;left:798.72px;top:1013.93px;font-family:'DejaVu Sans Mono', monospace;font-size:28.8px;line-height:28.8px;color:#6e7681;white-space:pre;-webkit-text-stroke:0.4px;letter-spacing:0.002px;">17</div>
<svg style="position:absolute;left:745.00px;top:965.30px;" width="38.40" height="38.40" viewBox="0 0 16 16"><path d="M2.300 2.300h6.300l4.500 5.700-4.500 5.700H2.300a.7.7 0 0 1-.7-.7V3a.7.700 0 0 1 .7-.7z" fill="none" stroke="#ffcc33" stroke-width="1.200" stroke-linejoin="round"/><circle cx="6.100" cy="8" r="2.100" fill="#e1251b"/></svg>
<div style="position:absolute;left:896.90px;top:322.73px;font-family:'DejaVu Sans Mono', monospace;font-size:28.8px;line-height:28.8px;white-space:pre;-webkit-text-stroke:0.45px;letter-spacing:0.0024px"><span style="color:#5e9bd4">package </span><span style="color:#66c3ab">com</span><span style="color:#cccccc">.</span><span style="color:#66c3ab">acme</span><span style="color:#cccccc">.</span><span style="color:#66c3ab">myproject</span><span style="color:#cccccc">;</span></div>
<div style="position:absolute;left:896.90px;top:409.13px;font-family:'DejaVu Sans Mono', monospace;font-size:28.8px;line-height:28.8px;white-space:pre;-webkit-text-stroke:0.45px;letter-spacing:0.0024px"><span style="color:#72995c">// camel<span style="display:inline-block;transform:scaleX(1.7)">-</span>k: language=java</span></div>
<div style="position:absolute;left:896.90px;top:495.53px;font-family:'DejaVu Sans Mono', monospace;font-size:28.8px;line-height:28.8px;white-space:pre;-webkit-text-stroke:0.45px;letter-spacing:0.0024px"><span style="color:#5e9bd4">import </span><span style="color:#66c3ab">org</span><span style="color:#cccccc">.</span><span style="color:#66c3ab">apache</span><span style="color:#cccccc">.</span><span style="color:#66c3ab">camel</span><span style="color:#cccccc">.</span><span style="color:#66c3ab">builder</span><span style="color:#cccccc">.</span><span style="color:#66c3ab">RouteBuilder</span><span style="color:#cccccc">;</span></div>
<div style="position:absolute;left:896.90px;top:581.93px;font-family:'DejaVu Sans Mono', monospace;font-size:28.8px;line-height:28.8px;white-space:pre;-webkit-text-stroke:0.45px;letter-spacing:0.0024px"><span style="color:#5e9bd4">public class </span><span style="color:#66c3ab">Demo </span><span style="color:#5e9bd4">extends </span><span style="color:#66c3ab">RouteBuilder </span><span style="color:#f8d84a">{</span></div>
<div style="position:absolute;left:966.26px;top:668.33px;font-family:'DejaVu Sans Mono', monospace;font-size:28.8px;line-height:28.8px;white-space:pre;-webkit-text-stroke:0.45px;letter-spacing:0.0024px"><span style="color:#cccccc">@</span><span style="color:#66c3ab">Override</span></div>
<div style="position:absolute;left:966.26px;top:711.53px;font-family:'DejaVu Sans Mono', monospace;font-size:28.8px;line-height:28.8px;white-space:pre;-webkit-text-stroke:0.45px;letter-spacing:0.0024px"><span style="color:#5e9bd4">public </span><span style="color:#66c3ab">void </span><span style="color:#dcdcaa">configure</span><span style="color:#d574d2">() </span><span style="color:#5e9bd4">throws </span><span style="color:#66c3ab">Exception </span><span style="color:#d574d2">{</span></div>
<div style="position:absolute;left:1035.62px;top:797.93px;font-family:'DejaVu Sans Mono', monospace;font-size:28.8px;line-height:28.8px;white-space:pre;-webkit-text-stroke:0.45px;letter-spacing:0.0024px"><span style="color:#72995c">// Write your routes here, for example:</span></div>
<div style="position:absolute;left:1035.62px;top:841.13px;font-family:'DejaVu Sans Mono', monospace;font-size:28.8px;line-height:28.8px;white-space:pre;-webkit-text-stroke:0.45px;letter-spacing:0.0024px"><span style="color:#dcdcaa">from</span><span style="color:#3c9df8">(</span><span style="color:#969696;background:rgba(255,255,255,0.055);border-radius:4px;">uri:</span><span style="color:#cb947b">"timer:java?period={{time:1000}}"</span><span style="color:#3c9df8">)</span></div>
<div style="position:absolute;left:1104.98px;top:884.33px;font-family:'DejaVu Sans Mono', monospace;font-size:28.8px;line-height:28.8px;white-space:pre;-webkit-text-stroke:0.45px;letter-spacing:0.0024px"><span style="color:#cccccc">.</span><span style="color:#dcdcaa">setBody</span><span style="color:#3c9df8">()</span></div>
<div style="position:absolute;left:1174.34px;top:927.53px;font-family:'DejaVu Sans Mono', monospace;font-size:28.8px;line-height:28.8px;white-space:pre;-webkit-text-stroke:0.45px;letter-spacing:0.0024px"><span style="color:#cccccc">.</span><span style="color:#dcdcaa">simple</span><span style="color:#3c9df8">(</span><span style="color:#969696;background:rgba(255,255,255,0.055);border-radius:4px;">text:</span><span style="color:#cb947b">"Hello Camel from ${routeId}"</span><span style="color:#3c9df8">)</span></div>
<div style="position:absolute;left:1104.98px;top:970.73px;font-family:'DejaVu Sans Mono', monospace;font-size:28.8px;line-height:28.8px;white-space:pre;-webkit-text-stroke:0.45px;letter-spacing:0.0024px"><span style="color:#cccccc">.</span><span style="color:#dcdcaa">log</span><span style="color:#3c9df8">(</span><span style="color:#969696;background:rgba(255,255,255,0.055);border-radius:4px;">message:</span><span style="color:#cb947b">"${body}"</span><span style="color:#3c9df8">)</span><span style="color:#cccccc">;</span></div>
<div style="position:absolute;left:966.26px;top:1013.93px;font-family:'DejaVu Sans Mono', monospace;font-size:28.8px;line-height:28.8px;white-space:pre;-webkit-text-stroke:0.45px;letter-spacing:0.0024px"><span style="color:#d574d2">}</span></div>
<div style="position:absolute;left:738.00px;top:1055.50px;width:2158.00px;height:718.50px;background:#181818;"></div>
<div style="position:absolute;left:738.00px;top:1055.20px;width:2158.00px;height:2.40px;background:#2b2b2b;"></div>
<div style="position:absolute;left:786.05px;top:1087.42px;font-family:'Liberation Sans', sans-serif;font-size:26.9px;line-height:26.9px;color:#9d9d9d;white-space:pre;-webkit-text-stroke:0.3px;letter-spacing:-0.735px;">PROBLEMS</div>
<div style="position:absolute;left:986.86px;top:1087.42px;font-family:'Liberation Sans', sans-serif;font-size:26.9px;line-height:26.9px;color:#9d9d9d;white-space:pre;-webkit-text-stroke:0.3px;letter-spacing:0.189px;">OUTPUT</div>
<div style="position:absolute;left:1155.15px;top:1087.42px;font-family:'Liberation Sans', sans-serif;font-size:26.9px;line-height:26.9px;color:#9d9d9d;white-space:pre;-webkit-text-stroke:0.3px;letter-spacing:-0.502px;">DEBUG CONSOLE</div>
<div style="position:absolute;left:1440.65px;top:1087.42px;font-family:'Liberation Sans', sans-serif;font-size:26.9px;line-height:26.9px;color:#e7e7e7;white-space:pre;-webkit-text-stroke:0.3px;letter-spacing:-0.326px;">TERMINAL</div>
<div style="position:absolute;left:1436.00px;top:1130.30px;width:143.00px;height:2.40px;background:#2e7ad1;"></div>
<svg style="position:absolute;left:1619.80px;top:1080.20px;" width="38.40" height="38.40" viewBox="0 0 16 16"><path fill="#cccccc" d="M4 8a1 1 0 1 1-2 0 1 1 0 0 1 2 0zm5 0a1 1 0 1 1-2 0 1 1 0 0 1 2 0zm5 0a1 1 0 1 1-2 0 1 1 0 0 1 2 0z"/></svg>
<svg style="position:absolute;left:1725.50px;top:1079.50px;" width="38.40" height="38.40" viewBox="0 0 16 16"><g fill="none" stroke="#cccccc" stroke-width="1" stroke-linejoin="round"><path d="M1.500 2.300L4 2.600L4.700 5.500L1.800 4.800zM4.700 5.500L9.300 10.100"/><rect x="8.200" y="10.700" width="6.200" height="2.800" rx="1.200" transform="rotate(45 11.300 12.100)"/><path d="M8.900 6.700l1.300-1.300a3.100 3.100 0 0 1 3.900-3.900L12 3.600l.400 1.600 1.600.400 2.100-2.100a3.100 3.100 0 0 1-3.900 3.900l-1.300 1.300M7.300 9.900l-4.100 4.100a1.150 1.150 0 0 1-1.700-1.700l4.100-4.100" transform="translate(-1.200,.3)"/></g></svg>
<div style="position:absolute;left:1772.55px;top:1084.85px;font-family:'Liberation Sans', sans-serif;font-size:29px;line-height:29px;color:#cccccc;white-space:pre;-webkit-text-stroke:0.3px;letter-spacing:-0.130px;">Start Camel native application debug-ready - Task</div>
<svg style="position:absolute;left:2410.00px;top:1075.00px;" width="50.00" height="50.00" viewBox="2410 1075 50 50"><path d="M2428.9 1084a17 17 0 0 1 19.7 25.700" fill="none" stroke="#cccccc" stroke-width="2.500"/></svg>
<svg style="position:absolute;left:2477.30px;top:1079.30px;" width="38.40" height="38.40" viewBox="0 0 16 16"><path fill="#cccccc" d="M14 7v1H8v6H7V8H1V7h6V1h1v6h6z"/></svg>
<svg style="position:absolute;left:2521.50px;top:1085.50px;" width="29.00" height="29.00" viewBox="0 0 16 16"><path fill="#cccccc" d="M7.976 10.072l4.357-4.357.62.618L8.284 11h-.618L3 6.333l.619-.618 4.357 4.357z"/></svg>
<svg style="position:absolute;left:2573.30px;top:1078.80px;" width="38.40" height="38.40" viewBox="0 0 16 16"><path fill="#cccccc" d="M14 1H3L2 2v11l1 1h11l1-1V2l-1-1zM8 13H3V2h5v11zm6 0H9V2h5v11z"/></svg>
<svg style="position:absolute;left:2635.30px;top:1078.80px;" width="38.40" height="38.40" viewBox="0 0 16 16"><path fill="#cccccc" d="M10 3h3v1h-1v9l-1 1H4l-1-1V4H2V3h3V2a1 1 0 0 1 1-1h3a1 1 0 0 1 1 1v1zM9 2H6v1h3V2zM4 13h7V4H4v9zm2-8H5v7h1V5zm1 0h1v7H7V5zm2 0h1v7H9V5z"/></svg>
<svg style="position:absolute;left:2697.30px;top:1079.80px;" width="38.40" height="38.40" viewBox="0 0 16 16"><path fill="#cccccc" d="M4 8a1 1 0 1 1-2 0 1 1 0 0 1 2 0zm5 0a1 1 0 1 1-2 0 1 1 0 0 1 2 0zm5 0a1 1 0 1 1-2 0 1 1 0 0 1 2 0z"/></svg>
<svg style="position:absolute;left:2759.30px;top:1079.80px;" width="38.40" height="38.40" viewBox="0 0 16 16"><path fill="#cccccc" d="M8.024 5.928l-4.357 4.357-.62-.618L7.716 5h.618L13 9.667l-.619.618-4.357-4.357z"/></svg>
<svg style="position:absolute;left:2821.80px;top:1078.80px;" width="38.40" height="38.40" viewBox="0 0 16 16"><path fill="#cccccc" d="M8 8.707l3.646 3.647.708-.707L8.707 8l3.647-3.646-.707-.708L8 7.293 4.354 3.646l-.707.708L7.293 8l-3.646 3.646.707.708L8 8.707z"/></svg>
<div style="position:absolute;left:2871.80px;top:1156.00px;width:8.40px;height:11.00px;background:#5a5a5a;"></div>
<div style="position:absolute;left:786px;top:1158.63px;font-family:'DejaVu Sans Mono',monospace;font-size:28.8px;line-height:28.8px;white-space:pre;-webkit-text-stroke:0.45px;letter-spacing:-0.3376px"><span style="color:#cccccc">2023<span style="display:inline-block;transform:scaleX(1.7)">-</span>12<span style="display:inline-block;transform:scaleX(1.7)">-</span>06 22:40:45,157 </span><span style="color:#8cc34b">INFO</span><span style="color:#cccccc">  [</span><span style="color:#4d8ef8">java:16</span><span style="color:#cccccc">] (</span><span style="color:#5fac52">Camel (camel<span style="display:inline-block;transform:scaleX(1.7)">-</span>1) thread #2 <span style="display:inline-block;transform:scaleX(1.7)">-</span> timer://java</span><span style="color:#cccccc">) </span><span style="color:#b5d4b0">Hello Camel from route1</span></div>
<div style="position:absolute;left:786px;top:1192.63px;font-family:'DejaVu Sans Mono',monospace;font-size:28.8px;line-height:28.8px;white-space:pre;-webkit-text-stroke:0.45px;letter-spacing:-0.3376px"><span style="color:#cccccc">2023<span style="display:inline-block;transform:scaleX(1.7)">-</span>12<span style="display:inline-block;transform:scaleX(1.7)">-</span>06 22:40:46,159 </span><span style="color:#8cc34b">INFO</span><span style="color:#cccccc">  [</span><span style="color:#4d8ef8">java:16</span><span style="color:#cccccc">] (</span><span style="color:#5fac52">Camel (camel<span style="display:inline-block;transform:scaleX(1.7)">-</span>1) thread #2 <span style="display:inline-block;transform:scaleX(1.7)">-</span> timer://java</span><span style="color:#cccccc">) </span><span style="color:#b5d4b0">Hello Camel from route1</span></div>
<div style="position:absolute;left:786px;top:1226.63px;font-family:'DejaVu Sans Mono',monospace;font-size:28.8px;line-height:28.8px;white-space:pre;-webkit-text-stroke:0.45px;letter-spacing:-0.3376px"><span style="color:#cccccc">2023<span style="display:inline-block;transform:scaleX(1.7)">-</span>12<span style="display:inline-block;transform:scaleX(1.7)">-</span>06 22:40:47,162 </span><span style="color:#8cc34b">INFO</span><span style="color:#cccccc">  [</span><span style="color:#4d8ef8">java:16</span><span style="color:#cccccc">] (</span><span style="color:#5fac52">Camel (camel<span style="display:inline-block;transform:scaleX(1.7)">-</span>1) thread #2 <span style="display:inline-block;transform:scaleX(1.7)">-</span> timer://java</span><span style="color:#cccccc">) </span><span style="color:#b5d4b0">Hello Camel from route1</span></div>
<div style="position:absolute;left:786px;top:1260.63px;font-family:'DejaVu Sans Mono',monospace;font-size:28.8px;line-height:28.8px;white-space:pre;-webkit-text-stroke:0.45px;letter-spacing:-0.3376px"><span style="color:#cccccc">2023<span style="display:inline-block;transform:scaleX(1.7)">-</span>12<span style="display:inline-block;transform:scaleX(1.7)">-</span>06 22:40:48,162 </span><span style="color:#8cc34b">INFO</span><span style="color:#cccccc">  [</span><span style="color:#4d8ef8">java:16</span><span style="color:#cccccc">] (</span><span style="color:#5fac52">Camel (camel<span style="display:inline-block;transform:scaleX(1.7)">-</span>1) thread #2 <span style="display:inline-block;transform:scaleX(1.7)">-</span> timer://java</span><span style="color:#cccccc">) </span><span style="color:#b5d4b0">Hello Camel from route1</span></div>
<div style="position:absolute;left:786px;top:1294.63px;font-family:'DejaVu Sans Mono',monospace;font-size:28.8px;line-height:28.8px;white-space:pre;-webkit-text-stroke:0.45px;letter-spacing:-0.3376px"><span style="color:#cccccc">2023<span style="display:inline-block;transform:scaleX(1.7)">-</span>12<span style="display:inline-block;transform:scaleX(1.7)">-</span>06 22:40:49,168 </span><span style="color:#8cc34b">INFO</span><span style="color:#cccccc">  [</span><span style="color:#4d8ef8">java:16</span><span style="color:#cccccc">] (</span><span style="color:#5fac52">Camel (camel<span style="display:inline-block;transform:scaleX(1.7)">-</span>1) thread #2 <span style="display:inline-block;transform:scaleX(1.7)">-</span> timer://java</span><span style="color:#cccccc">) </span><span style="color:#b5d4b0">Hello Camel from route1</span></div>
<div style="position:absolute;left:786px;top:1328.63px;font-family:'DejaVu Sans Mono',monospace;font-size:28.8px;line-height:28.8px;white-space:pre;-webkit-text-stroke:0.45px;letter-spacing:-0.3376px"><span style="color:#cccccc">2023<span style="display:inline-block;transform:scaleX(1.7)">-</span>12<span style="display:inline-block;transform:scaleX(1.7)">-</span>06 22:40:50,170 </span><span style="color:#8cc34b">INFO</span><span style="color:#cccccc">  [</span><span style="color:#4d8ef8">java:16</span><span style="color:#cccccc">] (</span><span style="color:#5fac52">Camel (camel<span style="display:inline-block;transform:scaleX(1.7)">-</span>1) thread #2 <span style="display:inline-block;transform:scaleX(1.7)">-</span> timer://java</span><span style="color:#cccccc">) </span><span style="color:#b5d4b0">Hello Camel from route1</span></div>
<div style="position:absolute;left:786px;top:1362.63px;font-family:'DejaVu Sans Mono',monospace;font-size:28.8px;line-height:28.8px;white-space:pre;-webkit-text-stroke:0.45px;letter-spacing:-0.3376px"><span style="color:#cccccc">2023<span style="display:inline-block;transform:scaleX(1.7)">-</span>12<span style="display:inline-block;transform:scaleX(1.7)">-</span>06 22:40:51,170 </span><span style="color:#8cc34b">INFO</span><span style="color:#cccccc">  [</span><span style="color:#4d8ef8">java:16</span><span style="color:#cccccc">] (</span><span style="color:#5fac52">Camel (camel<span style="display:inline-block;transform:scaleX(1.7)">-</span>1) thread #2 <span style="display:inline-block;transform:scaleX(1.7)">-</span> timer://java</span><span style="color:#cccccc">) </span><span style="color:#b5d4b0">Hello Camel from route1</span></div>
<div style="position:absolute;left:786px;top:1396.63px;font-family:'DejaVu Sans Mono',monospace;font-size:28.8px;line-height:28.8px;white-space:pre;-webkit-text-stroke:0.45px;letter-spacing:-0.3376px"><span style="color:#cccccc">2023<span style="display:inline-block;transform:scaleX(1.7)">-</span>12<span style="display:inline-block;transform:scaleX(1.7)">-</span>06 22:40:52,175 </span><span style="color:#8cc34b">INFO</span><span style="color:#cccccc">  [</span><span style="color:#4d8ef8">java:16</span><span style="color:#cccccc">] (</span><span style="color:#5fac52">Camel (camel<span style="display:inline-block;transform:scaleX(1.7)">-</span>1) thread #2 <span style="display:inline-block;transform:scaleX(1.7)">-</span> timer://java</span><span style="color:#cccccc">) </span><span style="color:#b5d4b0">Hello Camel from route1</span></div>
<div style="position:absolute;left:786px;top:1430.63px;font-family:'DejaVu Sans Mono',monospace;font-size:28.8px;line-height:28.8px;white-space:pre;-webkit-text-stroke:0.45px;letter-spacing:-0.3376px"><span style="color:#cccccc">2023<span style="display:inline-block;transform:scaleX(1.7)">-</span>12<span style="display:inline-block;transform:scaleX(1.7)">-</span>06 22:40:53,180 </span><span style="color:#8cc34b">INFO</span><span style="color:#cccccc">  [</span><span style="color:#4d8ef8">java:16</span><span style="color:#cccccc">] (</span><span style="color:#5fac52">Camel (camel<span style="display:inline-block;transform:scaleX(1.7)">-</span>1) thread #2 <span style="display:inline-block;transform:scaleX(1.7)">-</span> timer://java</span><span style="color:#cccccc">) </span><span style="color:#b5d4b0">Hello Camel from route1</span></div>
<div style="position:absolute;left:786px;top:1464.63px;font-family:'DejaVu Sans Mono',monospace;font-size:28.8px;line-height:28.8px;white-space:pre;-webkit-text-stroke:0.45px;letter-spacing:-0.3376px"><span style="color:#cccccc">2023<span style="display:inline-block;transform:scaleX(1.7)">-</span>12<span style="display:inline-block;transform:scaleX(1.7)">-</span>06 22:40:53,494 </span><span style="color:#8cc34b">INFO</span><span style="color:#cccccc">  [</span><span style="color:#4d8ef8">org.apa.cam.imp.deb.BacklogDebugger</span><span style="color:#cccccc">] (</span><span style="color:#5fac52">RMI TCP Connection(5)<span style="display:inline-block;transform:scaleX(1.7)">-</span>192.168.7.107</span><span style="color:#cccccc">) </span><span style="color:#b5d4b0">Adding breakpoi</span></div>
<div style="position:absolute;left:786px;top:1498.63px;font-family:'DejaVu Sans Mono',monospace;font-size:28.8px;line-height:28.8px;white-space:pre;-webkit-text-stroke:0.45px;letter-spacing:-0.3376px"><span style="color:#b5d4b0">nt log1</span></div>
<div style="position:absolute;left:786px;top:1532.63px;font-family:'DejaVu Sans Mono',monospace;font-size:28.8px;line-height:28.8px;white-space:pre;-webkit-text-stroke:0.45px;letter-spacing:-0.3376px"><span style="color:#cccccc">2023<span style="display:inline-block;transform:scaleX(1.7)">-</span>12<span style="display:inline-block;transform:scaleX(1.7)">-</span>06 22:40:54,184 </span><span style="color:#8cc34b">INFO</span><span style="color:#cccccc">  [</span><span style="color:#4d8ef8">org.apa.cam.imp.deb.BacklogDebugger</span><span style="color:#cccccc">] (</span><span style="color:#5fac52">Camel (camel<span style="display:inline-block;transform:scaleX(1.7)">-</span>1) thread #2 <span style="display:inline-block;transform:scaleX(1.7)">-</span> timer://java</span><span style="color:#cccccc">) </span><span style="color:#b5d4b0">NodeBreakp</span></div>
<div style="position:absolute;left:786px;top:1566.63px;font-family:'DejaVu Sans Mono',monospace;font-size:28.8px;line-height:28.8px;white-space:pre;-webkit-text-stroke:0.45px;letter-spacing:-0.3376px"><span style="color:#b5d4b0">oint at node log1 is waiting to continue for exchangeId: B74C46FC8B0F810<span style="display:inline-block;transform:scaleX(1.7)">-</span>0000000000000021</span></div>
<div style="position:absolute;left:786px;top:1600.63px;font-family:'DejaVu Sans Mono',monospace;font-size:28.8px;line-height:28.8px;white-space:pre;-webkit-text-stroke:0.45px;letter-spacing:-0.3376px"><span style="color:#cccccc">2023<span style="display:inline-block;transform:scaleX(1.7)">-</span>12<span style="display:inline-block;transform:scaleX(1.7)">-</span>06 22:40:54,833 </span><span style="color:#8cc34b">INFO</span><span style="color:#cccccc">  [</span><span style="color:#4d8ef8">org.apa.cam.imp.deb.BacklogDebugger</span><span style="color:#cccccc">] (</span><span style="color:#5fac52">RMI TCP Connection(5)<span style="display:inline-block;transform:scaleX(1.7)">-</span>192.168.7.107</span><span style="color:#cccccc">) </span><span style="color:#b5d4b0">Dump trace mess</span></div>
<div style="position:absolute;left:786px;top:1634.63px;font-family:'DejaVu Sans Mono',monospace;font-size:28.8px;line-height:28.8px;white-space:pre;-webkit-text-stroke:0.45px;letter-spacing:-0.3376px"><span style="color:#b5d4b0">age from breakpoint log1</span></div>
<div style="position:absolute;left:786px;top:1668.63px;font-family:'DejaVu Sans Mono',monospace;font-size:28.8px;line-height:28.8px;white-space:pre;-webkit-text-stroke:0.45px;letter-spacing:-0.3376px"><span style="color:#cccccc">2023<span style="display:inline-block;transform:scaleX(1.7)">-</span>12<span style="display:inline-block;transform:scaleX(1.7)">-</span>06 22:40:56,697 </span><span style="color:#8cc34b">INFO</span><span style="color:#cccccc">  [</span><span style="color:#4d8ef8">org.apa.cam.imp.deb.BacklogDebugger</span><span style="color:#cccccc">] (</span><span style="color:#5fac52">RMI TCP Connection(5)<span style="display:inline-block;transform:scaleX(1.7)">-</span>192.168.7.107</span><span style="color:#cccccc">) </span><span style="color:#b5d4b0">Dump trace mess</span></div>
<div style="position:absolute;left:786px;top:1702.63px;font-family:'DejaVu Sans Mono',monospace;font-size:28.8px;line-height:28.8px;white-space:pre;-webkit-text-stroke:0.45px;letter-spacing:-0.3376px"><span style="color:#b5d4b0">age from breakpoint log1</span></div>
<div style="position:absolute;left:112.00px;top:1774.00px;width:2784.00px;height:52.00px;background:#2e7ad1;"></div>
<svg style="position:absolute;left:135.80px;top:1780.70px;" width="34.00" height="34.00" viewBox="0 0 16 16"><path fill="#ffffff" d="M12.904 9.57L8.928 5.596l3.976-3.976-.619-.62L8 5.286v.619l4.285 4.285.62-.618zM3 5.62l4.072 4.07L3 13.763l.619.618L8 10v-.619L3.619 5 3 5.619z"/></svg>
<svg style="position:absolute;left:212.20px;top:1781.40px;" width="34.00" height="34.00" viewBox="0 0 16 16"><path fill="#ffffff" d="M8.6 1c1.6.1 3.1.9 4.2 2 1.3 1.4 2 3.1 2 5.1 0 1.6-.6 3.1-1.6 4.4-1 1.2-2.4 2.1-4 2.4-1.6.3-3.2.1-4.6-.7-1.4-.8-2.5-2-3.1-3.5C.9 9.2.8 7.5 1.3 6c.5-1.6 1.4-2.9 2.8-3.8C5.4 1.3 7 .9 8.6 1zm.5 12.900c1.3-.3 2.5-1 3.4-2.1.8-1.1 1.300-2.400 1.200-3.800 0-1.600-.600-3.200-1.700-4.300-1-1-2.200-1.600-3.600-1.700-1.300-.1-2.700.2-3.800 1-1.100.8-1.900 1.900-2.300 3.300-.4 1.300-.4 2.700.2 4 .6 1.300 1.500 2.300 2.700 3 1.200.7 2.600.9 3.900.6zM7.900 7.500L10.300 5l.7.7-2.400 2.500 2.400 2.500-.7.7-2.400-2.500-2.400 2.500-.7-.7 2.400-2.500-2.400-2.500.7-.7 2.400 2.500z"/></svg>
<div style="position:absolute;left:254.53px;top:1784.51px;font-family:'Liberation Sans', sans-serif;font-size:29.4px;line-height:29.4px;color:#ffffff;white-space:pre;-webkit-text-stroke:0.3px;letter-spacing:1.181px;">0</div>
<svg style="position:absolute;left:280.40px;top:1781.40px;" width="34.00" height="34.00" viewBox="0 0 16 16"><path fill="#ffffff" d="M7.56 1h.88l6.54 12.26-.44.74H1.44L1 13.26 7.56 1zM8 2.28L2.28 13H13.7L8 2.28zM8.625 12v-1h-1.250v1h1.250zm-1.250-2V6h1.250v4h-1.250z"/></svg>
<div style="position:absolute;left:322.03px;top:1784.51px;font-family:'Liberation Sans', sans-serif;font-size:29.4px;line-height:29.4px;color:#ffffff;white-space:pre;-webkit-text-stroke:0.3px;letter-spacing:1.881px;">0</div>
<svg style="position:absolute;left:380.60px;top:1783.40px;" width="29.40" height="29.40" viewBox="0 0 16 16"><g fill="none" stroke="#ffffff" stroke-width="1.15" stroke-linejoin="round"><path d="M1.500 2.300L4 2.600L4.700 5.500L1.800 4.800zM4.700 5.500L9.300 10.100"/><rect x="8.200" y="10.700" width="6.200" height="2.800" rx="1.200" transform="rotate(45 11.300 12.100)"/><path d="M8.900 6.700l1.300-1.300a3.100 3.100 0 0 1 3.900-3.900L12 3.600l.400 1.600 1.600.400 2.100-2.100a3.100 3.100 0 0 1-3.900 3.900l-1.300 1.300M7.300 9.900l-4.100 4.100a1.150 1.150 0 0 1-1.700-1.700l4.100-4.100" transform="translate(-1.200,.3)"/></g></svg>
<div style="position:absolute;left:420.56px;top:1784.51px;font-family:'Liberation Sans', sans-serif;font-size:29.4px;line-height:29.4px;color:#ffffff;white-space:pre;-webkit-text-stroke:0.3px;letter-spacing:0.721px;">1</div>
<svg style="position:absolute;left:480.00px;top:1783.20px;" width="30.60" height="30.60" viewBox="0 0 16 16"><path d="M5.300 14.500L8 6.500l2.700 8M6.300 11.800h3.400" fill="none" stroke="#ffffff" stroke-width="1"/><circle cx="8" cy="5.500" r="1.100" fill="#ffffff"/><path d="M5.200 8.200a4 4 0 0 1 0-5.400M10.800 8.200a4 4 0 0 0 0-5.400M3.300 9.800a6.500 6.500 0 0 1 0-8.600M12.700 9.800a6.500 6.500 0 0 0 0-8.600" fill="none" stroke="#ffffff" stroke-width="1"/></svg>
<div style="position:absolute;left:518.53px;top:1784.51px;font-family:'Liberation Sans', sans-serif;font-size:29.4px;line-height:29.4px;color:#ffffff;white-space:pre;-webkit-text-stroke:0.3px;letter-spacing:2.481px;">0</div>
<svg style="position:absolute;left:575.10px;top:1785.10px;" width="31.00" height="31.00" viewBox="0 0 24 24"><path fill="#ffffff" d="M10.94 13.5l-1.32 1.32a3.73 3.73 0 0 0-7.24 0L1.06 13.5 0 14.56l1.72 1.72-.22.22V18H0v1.5h1.5v.08c.077.489.214.966.41 1.42L0 22.94 1.06 24l1.65-1.65A4.308 4.308 0 0 0 6 24a4.31 4.31 0 0 0 3.29-1.65L10.94 24 12 22.94 10.09 21c.198-.464.336-.951.41-1.45v-.1H12V18h-1.5v-1.5l-.22-.22L12 14.56l-1.06-1.06zM6 13.5a2.25 2.25 0 0 1 2.25 2.25h-4.5A2.25 2.25 0 0 1 6 13.5zm3 6a3.33 3.33 0 0 1-3 3 3.33 3.33 0 0 1-3-3v-2.25h6v2.25zm14.76-9.9v1.26L13.5 17.37V15.6l8.5-5.37L9 2v9.46a5.07 5.07 0 0 0-1.5-.72V.63L8.64 0l15.12 9.6z"/></svg>
<div style="position:absolute;left:616.53px;top:1784.51px;font-family:'Liberation Sans', sans-serif;font-size:29.4px;line-height:29.4px;color:#ffffff;white-space:pre;-webkit-text-stroke:0.3px;letter-spacing:0.582px;">Run Camel native application and attach Camel debugger (quarkus-native-de</div>
<div style="position:absolute;left:1758.53px;top:1784.51px;font-family:'Liberation Sans', sans-serif;font-size:29.4px;line-height:29.4px;color:#ffffff;white-space:pre;-webkit-text-stroke:0.3px;letter-spacing:0.531px;">Ln 16, Col 1</div>
<div style="position:absolute;left:1961.93px;top:1784.51px;font-family:'Liberation Sans', sans-serif;font-size:29.4px;line-height:29.4px;color:#ffffff;white-space:pre;-webkit-text-stroke:0.3px;letter-spacing:0.565px;">Spaces: 4</div>
<div style="position:absolute;left:2135.53px;top:1784.51px;font-family:'Liberation Sans', sans-serif;font-size:29.4px;line-height:29.4px;color:#ffffff;white-space:pre;-webkit-text-stroke:0.3px;letter-spacing:1.019px;">UTF-8</div>
<div style="position:absolute;left:2261.93px;top:1784.51px;font-family:'Liberation Sans', sans-serif;font-size:29.4px;line-height:29.4px;color:#ffffff;white-space:pre;-webkit-text-stroke:0.3px;letter-spacing:-1.873px;">LF</div>
<div style="position:absolute;left:2331.20px;top:1784.89px;font-family:'Liberation Sans', sans-serif;font-size:26px;line-height:26px;color:#ffffff;white-space:pre;-webkit-text-stroke:0.3px;letter-spacing:9.225px;">{}</div>
<div style="position:absolute;left:2375.33px;top:1784.51px;font-family:'Liberation Sans', sans-serif;font-size:29.4px;line-height:29.4px;color:#ffffff;white-space:pre;-webkit-text-stroke:0.3px;letter-spacing:0.149px;">Java</div>
<div style="position:absolute;left:2471.03px;top:1784.51px;font-family:'Liberation Sans', sans-serif;font-size:29.4px;line-height:29.4px;color:#ffffff;white-space:pre;-webkit-text-stroke:0.3px;letter-spacing:-0.058px;">Camel LS</div>
<svg style="position:absolute;left:2678.50px;top:1781.40px;" width="34.00" height="34.00" viewBox="0 0 16 16"><path fill="#ffffff" d="M14.431 3.323l-8.47 10-.79-.036-3.35-4.77.818-.574 2.978 4.24 8.051-9.506.764.646z"/></svg>
<div style="position:absolute;left:2720.53px;top:1784.51px;font-family:'Liberation Sans', sans-serif;font-size:29.4px;line-height:29.4px;color:#ffffff;white-space:pre;-webkit-text-stroke:0.3px;letter-spacing:0.495px;">Spell</div>
<svg style="position:absolute;left:2300.00px;top:1770.00px;" width="600.00" height="60.00" viewBox="0 0 2380.0 238.0"><g fill="none" stroke="#ffffff" stroke-width="10.500" stroke-linejoin="round" stroke-linecap="round"><path d="M1240 156Q1234 156 1234 150V134Q1234 128 1240 126L1264 113L1294 72Q1312 62 1312 84L1300 108H1328Q1344 110 1339 126L1326 150Q1322 157 1312 157Z"/><path d="M2108 150H2204L2192 128V110M2120 128L2108 150M2120 128V100Q2122 66 2156 62M2140 153Q2155 176 2170 153"/><circle cx="2190" cy="80" r="22" fill="#ffffff" stroke="none"/></g></svg>
</div>
<div style="position:absolute;left:112px;top:76px;width:2784px;height:1750px;border-radius:20px;box-sizing:border-box;border:1.5px solid rgba(255,255,255,0.17);border-top:1px solid rgba(255,255,255,0.34);pointer-events:none"></div>
<div style="position:absolute;left:111px;top:75px;width:2786px;height:1752px;border-radius:21px;box-sizing:border-box;border:1px solid rgba(0,0,0,0.8);pointer-events:none"></div>
</body></html>
